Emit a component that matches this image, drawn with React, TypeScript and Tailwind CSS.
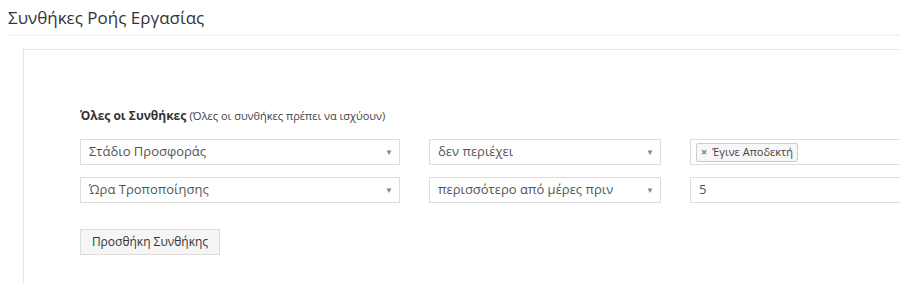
import React from 'react'

const Caret = () => (
  <span className="ml-auto text-[8px] leading-none text-[#888]">▼</span>
)

const SelectBox = ({ value, width }: { value: string; width: string }) => (
  <div
    className={`flex h-[26px] shrink-0 items-center border border-[#ddd] bg-white pl-[8px] pr-[6px] text-[13px] text-[#555] ${width}`}
  >
    <span className="truncate">{value}</span>
    <Caret />
  </div>
)

const App = () => {
  return (
    <div className="h-[283px] w-[900px] overflow-hidden bg-white font-['Open_Sans','Noto_Sans',sans-serif] text-[#333]">
      {/* τίτλος σελίδας */}
      <div className="ml-[8px] border-b-2 border-[#f5f5f5] pt-[6px] pb-[4px]">
        <h1 className="text-[17px] leading-[24px] text-[#333]">
          Συνθήκες Ροής Εργασίας
        </h1>
      </div>

      {/* πλαίσιο συνθηκών */}
      <div className="ml-[23px] mt-[13px] w-[1000px] border-l border-t border-[#e5e5e5] pl-[56px] pt-[57px] pb-[30px]">
        <div className="text-[12px] leading-[18px]">
          <span className="font-bold text-[#333]">Όλες οι Συνθήκες</span>{' '}
          <span className="text-[11px] text-[#444]">
            (Όλες οι συνθήκες πρέπει να ισχύουν)
          </span>
        </div>

        <div className="mt-[14px] flex flex-col gap-[12px]">
          <div className="flex gap-[29px]">
            <SelectBox value="Στάδιο Προσφοράς" width="w-[320px]" />
            <SelectBox value="δεν περιέχει" width="w-[232px]" />
            <div className="flex h-[26px] w-[260px] shrink-0 items-center border border-[#ddd] bg-white pl-[5px]">
              <span className="flex h-[19px] items-center gap-[5px] rounded-[2px] border border-[#ccc] bg-[#f7f7f7] px-[4px] text-[11px] text-[#444]">
                <span className="text-[11px] font-bold text-[#777]">×</span>
                Έγινε Αποδεκτή
              </span>
            </div>
          </div>
          <div className="flex gap-[29px]">
            <SelectBox value="Ώρα Τροποποίησης" width="w-[320px]" />
            <SelectBox value="περισσότερο από μέρες πριν" width="w-[232px]" />
            <div className="flex h-[26px] w-[260px] shrink-0 items-center border border-[#ddd] bg-white pl-[8px] text-[13px] text-[#555]">
              5
            </div>
          </div>
        </div>

        <button className="mt-[26px] h-[26px] w-[140px] border border-[#ddd] bg-[#f5f5f5] text-[12px] text-[#333]">
          Προσθήκη Συνθήκης
        </button>
      </div>
    </div>
  )
}

export default App
